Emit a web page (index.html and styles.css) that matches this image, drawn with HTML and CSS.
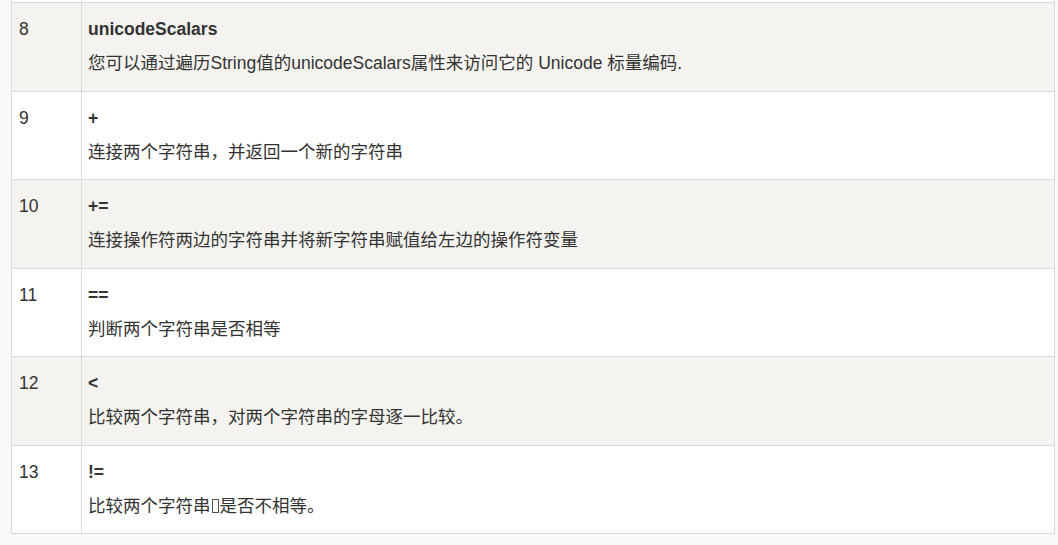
FILE: index.html
```html
<!DOCTYPE html>
<html lang="zh-CN">
<head>
<meta charset="utf-8">
<title>Swift 字符串</title>
<link rel="stylesheet" href="styles.css">
</head>
<body>
<div class="table">
  <div class="row stub">
    <div class="num"></div>
    <div class="desc"></div>
  </div>
  <div class="row alt">
    <div class="num">8</div>
    <div class="desc"><div class="name">unicodeScalars</div><p>您可以通过遍历String值的unicodeScalars属性来访问它的 Unicode 标量编码.</p></div>
  </div>
  <div class="row">
    <div class="num">9</div>
    <div class="desc"><div class="name">+</div><p>连接两个字符串，并返回一个新的字符串</p></div>
  </div>
  <div class="row alt">
    <div class="num">10</div>
    <div class="desc"><div class="name">+=</div><p>连接操作符两边的字符串并将新字符串赋值给左边的操作符变量</p></div>
  </div>
  <div class="row">
    <div class="num">11</div>
    <div class="desc"><div class="name">==</div><p>判断两个字符串是否相等</p></div>
  </div>
  <div class="row alt">
    <div class="num">12</div>
    <div class="desc"><div class="name">&lt;</div><p>比较两个字符串，对两个字符串的字母逐一比较。</p></div>
  </div>
  <div class="row">
    <div class="num">13</div>
    <div class="desc"><div class="name">!=</div><p>比较两个字符串<span class="tofu"></span>是否不相等。</p></div>
  </div>
</div>
</body>
</html>
```

FILE: styles.css
```css
html, body {
  margin: 0;
  padding: 0;
  background: #f8f9fb;
}
body {
  font-family: "Liberation Sans", Arial, "Noto Sans CJK SC", sans-serif;
  font-size: 17.5px;
  color: #333;
  overflow: hidden;
}
.table {
  margin: 0 0 0 11px;
  width: 1044px;
  box-sizing: border-box;
  border-left: 1px solid #dadada;
  border-right: 1px solid #dadada;
  background: #fff;
}
.row {
  display: grid;
  grid-template-columns: 70px 1fr;
  border-bottom: 1px solid #dadada;
  background: #fff;
  line-height: 25px;
}
.row.alt {
  background: #f4f3ef;
}
.num {
  box-sizing: border-box;
  border-right: 1px solid #dadada;
  padding: 14px 6px 14.5px 7px;
}
.desc {
  padding: 14px 8px 14.5px 6px;
}
.row.stub .num,
.row.stub .desc {
  padding: 0;
  height: 2px;
}
.name {
  font-weight: bold;
}
.desc p {
  margin: 9px 0 0;
}
.tofu {
  display: inline-block;
  width: 7px;
  height: 14px;
  border: 1px solid #555;
  box-sizing: border-box;
  margin: 0 1px;
  vertical-align: -1px;
}
```
